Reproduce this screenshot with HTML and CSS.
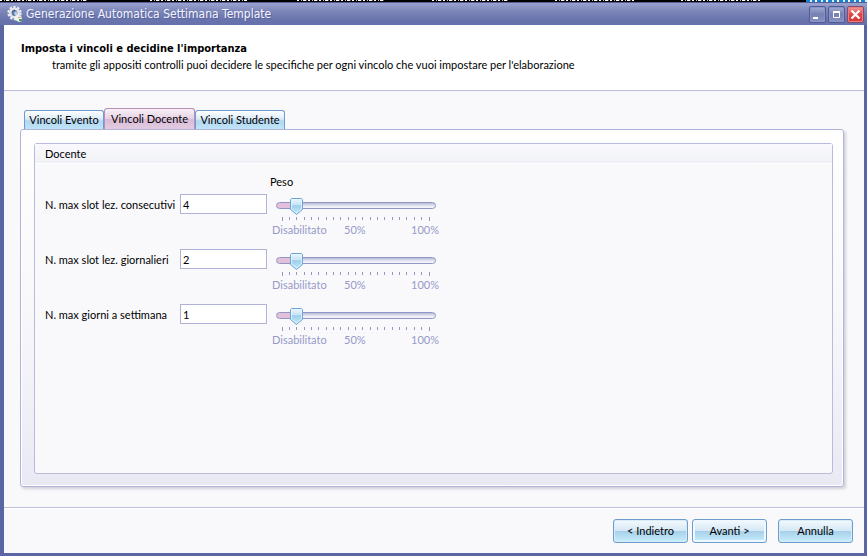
FILE: index.html
```
<!DOCTYPE html>
<html lang="it">
<head>
<meta charset="utf-8">
<title>Generazione Automatica Settimana Template</title>
<link rel="stylesheet" href="styles.css">
</head>
<body>
<svg class="defs" aria-hidden="true"><defs>
<path id="ticks" d="M.5 0v4M7.5 0v3M14.5 0v3M22.5 0v3M29.5 0v3M36.5 0v3M44.5 0v3M51.5 0v3M58.5 0v3M66.5 0v3M73.5 0v3M80.5 0v3M88.5 0v3M95.5 0v3M102.5 0v3M110.5 0v3M117.5 0v3M124.5 0v3M132.5 0v3M139.5 0v3M147.5 0v4"/>
</defs></svg>
<div class="desktop" aria-hidden="true"><i class="w1"></i><i class="w2"></i><i class="w3"></i><i class="w4"></i><i class="w5"></i><i class="w6"></i><i class="w7"></i></div>
<div class="window">
  <div class="titlebar">
    <svg class="app-icon" viewBox="0 0 16 16" aria-hidden="true">
      <circle cx="7.5" cy="7" r="6" fill="none" stroke="#e8ebef" stroke-width="2.4" stroke-dasharray="2.3 1.47"/>
      <circle cx="7.5" cy="7" r="4.2" fill="#5d78a5" stroke="#e3e6ea" stroke-width="2.6"/>
      <path d="M5 6q1-2 3-2" fill="none" stroke="#374f7e"/>
      <circle cx="9" cy="7.500" r="2" fill="#b5c9df"/>
      <path d="M8 10l3-2 4 3v4l-3 1-4-2z" fill="#eef0ee"/>
      <path d="M11 11.500h4" stroke="#d5a79c"/><path d="M12 14h3" stroke="#4aa35a" stroke-width="2"/>
    </svg>
    <span class="caption">Generazione Automatica Settimana Template</span>
    <div class="controls">
      <button class="control" aria-label="Riduci a icona"><svg viewBox="0 0 15 15"><path d="M3 11h5" stroke="#fff" stroke-width="2"/></svg></button>
      <button class="control" aria-label="Ingrandisci"><svg viewBox="0 0 15 15"><path d="M4 5h7" stroke="#fff" stroke-width="2"/><path d="M4.500 5v5.500h6V5" fill="none" stroke="#fff"/></svg></button>
      <button class="control close" aria-label="Chiudi"><svg viewBox="0 0 15 15"><path d="M3.500 3.500l8 8M11.500 3.500l-8 8" stroke="#fff" stroke-width="2.200"/></svg></button>
    </div>
  </div>
  <main class="client">
    <header class="intro">
      <h1>Imposta i vincoli e decidine l'importanza</h1>
      <p>tramite gli appositi controlli puoi decidere le specifiche per ogni vincolo che vuoi impostare per l'elaborazione</p>
    </header>
    <section class="content">
      <div class="tabs" role="tablist">
        <button class="tab" role="tab">Vincoli Evento</button>
        <button class="tab active" role="tab" aria-selected="true">Vincoli Docente</button>
        <button class="tab" role="tab">Vincoli Studente</button>
      </div>
      <div class="page">
        <div class="group">
          <h2>Docente</h2>
          <form class="fields">
            <span class="weight-title">Peso</span>
            <label for="n1">N. max slot lez. consecutivi</label>
            <input class="number" id="n1" type="text" value="4">
            <div class="weight">
              <input type="range" min="0" max="22" value="2" aria-label="Peso slot consecutivi">
              <svg class="ticks"><use href="#ticks"/></svg>
              <div class="scale"><span>Disabilitato</span><span>50%</span><span>100%</span></div>
            </div>
            <label for="n2">N. max slot lez. giornalieri</label>
            <input class="number" id="n2" type="text" value="2">
            <div class="weight">
              <input type="range" min="0" max="22" value="2" aria-label="Peso slot giornalieri">
              <svg class="ticks"><use href="#ticks"/></svg>
              <div class="scale"><span>Disabilitato</span><span>50%</span><span>100%</span></div>
            </div>
            <label for="n3">N. max giorni a settimana</label>
            <input class="number" id="n3" type="text" value="1">
            <div class="weight">
              <input type="range" min="0" max="22" value="2" aria-label="Peso giorni a settimana">
              <svg class="ticks"><use href="#ticks"/></svg>
              <div class="scale"><span>Disabilitato</span><span>50%</span><span>100%</span></div>
            </div>
          </form>
        </div>
      </div>
    </section>
    <footer class="actions">
      <button class="action">&lt; Indietro</button>
      <button class="action focus">Avanti &gt;</button>
      <button class="action cancel">Annulla</button>
    </footer>
  </main>
</div>
</body>
</html>
```
FILE: styles.css
```
* { box-sizing: border-box; }
body {
  margin: 0;
  min-height: 100vh;
  display: flex;
  flex-direction: column;
  font: 11px/14px Tahoma, Lato, "Liberation Sans", sans-serif;
  color: #000;
}
h1, h2, p { margin: 0; font-size: inherit; }
button, input { font: inherit; color: inherit; }
.defs { position: absolute; width: 0; height: 0; }
/* Lower edge of the icon captions that the window covers */
.desktop {
  display: grid;
  grid-template-columns: 150px 147px 135px 123px 126px 125px 1fr;
  height: 2px;
  background: #000;
}
.desktop i {
  height: 1px;
  background: repeating-linear-gradient(90deg, #fff 0 2px, #000 2px 4px, #b9c7d8 4px 5px, #000 5px 6px, #fff 6px 9px, #6b4a2a 9px 10px, #000 10px 11px);
}
.w1 { width: 87px; }
.w2 { width: 97px; }
.w3 { width: 88px; }
.w4 { width: 76px; }
.w5 { width: 79px; }
.w6 { width: 79px; }
.desktop .w7 { height: 2px; background: repeating-linear-gradient(90deg, #1583d0 0 4px, #d9ecfa 4px 6px, #1583d0 6px 9px, #fff 9px 11px); }
.window {
  flex: 1;
  display: flex;
  flex-direction: column;
  border: solid #5a66a4;
  border-width: 0 3px 3px 4px;
  background: #f9f9fc;
}
.titlebar {
  display: flex;
  align-items: center;
  height: 23px;
  margin: 0 -3px 0 -4px;
  padding: 0 3px 0 7px;
  border-top: 1px solid #555f94;
  background: linear-gradient(#9aa3cf, #7d87b9 35%, #6974ad 75%, #6670ab);
}
.app-icon { width: 16px; height: 16px; }
.caption {
  margin-left: 3px;
  color: #f4f5fc;
  font-family: "DejaVu Sans Condensed", "DejaVu Sans", sans-serif;
  font-stretch: condensed;
  font-size: 12px;
  text-shadow: 1px 1px #5963a0;
}
.controls { display: flex; gap: 2px; margin-left: auto; }
.control {
  width: 17px;
  height: 17px;
  padding: 0;
  border: 1px solid #4f5b96;
  border-radius: 2px;
  background: linear-gradient(#a3abd1, #7580b4 50%, #8790c1);
  box-shadow: inset 0 0 0 1px #8a94c2;
}
.control svg { display: block; width: 15px; height: 15px; }
.close { background: linear-gradient(#f19b9b, #df4545 50%, #d63737); box-shadow: inset 0 0 0 1px #e38080; border-color: #87496f; }
.client { flex: 1; display: flex; flex-direction: column; }
.intro { height: 66px; padding: 16px 17px 0; background: #fff; border-bottom: 1px solid #b9bbdf; }
.intro h1 {
  font-family: "DejaVu Sans Condensed", "DejaVu Sans", sans-serif;
  font-stretch: condensed;
  font-weight: bold;
  line-height: 15px;
}
.intro p { padding-left: 31px; line-height: 17px; }
.content { flex: 1; display: flex; flex-direction: column; padding: 17px 20px 20px 16px; }
.tabs { display: flex; align-items: flex-end; height: 21px; padding-left: 4px; }
.tab {
  height: 19px;
  padding: 0;
  width: 80px;
  border: 1px solid #6f9bd0;
  border-bottom: 0;
  border-radius: 3px 3px 0 0;
  background: linear-gradient(#fff, #d9ebf8 45%, #b2d7f1 55%, #bfe5f9);
  white-space: nowrap;
}
.tab:last-child { width: 90px; }
.tab.active {
  width: 91px;
  height: 21px;
  border-color: #b990b9;
  background: linear-gradient(#f8f0f7, #e6d2e4 48%, #d9bcd7 52%, #e2cbe1);
}
.page {
  flex: 1;
  display: flex;
  padding: 13px 10px 12px 13px;
  border: 1px solid #b0b4d8;
  border-radius: 3px;
  background: linear-gradient(#fff, #f8f8fb 50%, #e9e9f4);
  box-shadow: inset 0 0 0 1px #fff, 2px 2px 3px #cfd0d7;
}
.group { flex: 1; border: 1px solid #b8bbdc; border-radius: 3px; background: #f9f9fc; }
.group h2 {
  height: 20px;
  padding: 3px 10px;
  font-weight: normal;
  background: linear-gradient(#fafafd, #f0f1f6);
  border-bottom: 1px solid #fff;
}
.fields {
  display: grid;
  grid-template-columns: 135px 87px 168px;
  grid-template-rows: 19px repeat(3, 55px);
  padding: 11px 0 0 10px;
  align-items: start;
}
.weight-title { grid-column: 2 / 4; padding-left: 90px; }
.fields label { padding-top: 4px; white-space: nowrap; }
.number {
  width: 87px;
  height: 20px;
  padding: 0 2px;
  border: 1px solid #b0b2d7;
  background: #fff;
}
.weight { padding: 2px 0 0 9px; color: #9699c7; }
.weight input {
  appearance: none;
  display: block;
  width: 160px;
  height: 18px;
  margin: 0;
  background: none;
}
.weight input::-webkit-slider-runnable-track {
  height: 7px;
  border: 1px solid #9097c5;
  border-radius: 4px;
  background: linear-gradient(90deg, #e3bfdc 18px, transparent 18px), linear-gradient(#b7bcd9, #e8e9f3 60%, #f8f8fc);
}
.weight input::-webkit-slider-thumb {
  appearance: none;
  width: 13px;
  height: 17px;
  margin-top: -5px;
  background: url("data:image/svg+xml,%3Csvg xmlns='http://www.w3.org/2000/svg' viewBox='0 0 13 17'%3E%3ClinearGradient id='g' x2='0' y2='1'%3E%3Cstop stop-color='%23eef8fd'/%3E%3Cstop offset='.4' stop-color='%23c5e3f4'/%3E%3Cstop offset='.45' stop-color='%239fcfec'/%3E%3Cstop offset='1' stop-color='%23c4ecfc'/%3E%3C/linearGradient%3E%3Cpath d='M1.500.5h10l1 1v10l-6 5-6-5v-10z' fill='url(%23g)' stroke='%236fa3d3'/%3E%3Cpath d='M1.500 11V1.500h10V11l-5 4z' fill='none' stroke='%23e4f5fd' stroke-opacity='.8'/%3E%3C/svg%3E");
}
.ticks { display: block; width: 148px; height: 4px; margin: 3px 0 0 6px; fill: none; stroke: #9297c8; }
.scale { display: grid; grid-template-columns: 72px 55px 40px; margin: 2px 0 0 -4px; }
.scale span:last-child { text-align: right; }
.actions {
  display: flex;
  justify-content: flex-end;
  gap: 4px;
  height: 46px;
  padding: 11px 11px 0;
  border-top: 1px solid #bdbfdf;
  box-shadow: inset 0 1px #fff;
}
.action {
  width: 75px;
  height: 24px;
  padding: 0;
  border: 1px solid #6d9cce;
  border-radius: 3px;
  background: linear-gradient(#f5fafe, #d5e8f6 48%, #a8d0eb 52%, #c8effc);
  box-shadow: inset 0 0 0 1px #d8ecf8;
}
.focus { box-shadow: inset 0 0 0 2px #eef8fe; }
.cancel { margin-left: 7px; }
```
